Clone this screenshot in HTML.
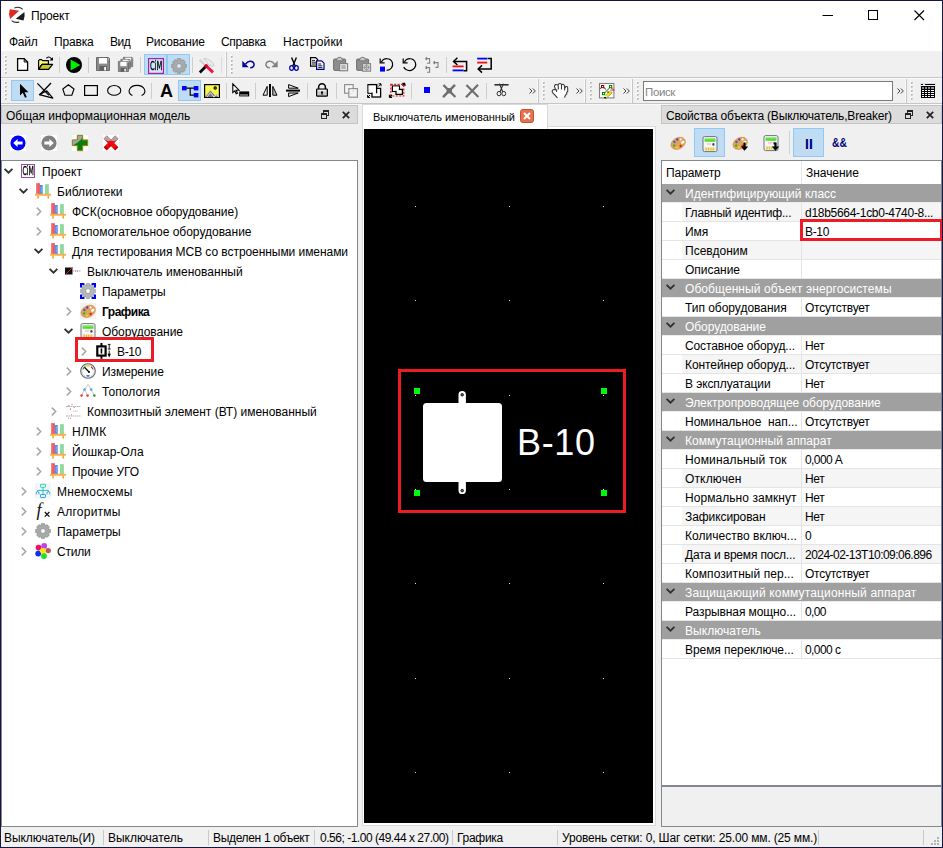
<!DOCTYPE html>
<html lang="ru"><head><meta charset="utf-8"><title>Проект</title>
<style>
html,body{margin:0;padding:0;}
body{width:943px;height:848px;overflow:hidden;background:#f0f0f0;font-family:"Liberation Sans",sans-serif;font-size:12px;color:#000;}
#win{position:relative;width:943px;height:848px;overflow:hidden;background:#f0f0f0;}
.a{position:absolute;}
.t{position:absolute;white-space:nowrap;line-height:14px;height:14px;}
svg{position:absolute;overflow:visible;}
.frame{position:absolute;background:#16163f;}
#titlebar{position:absolute;left:1px;top:1px;width:941px;height:30px;background:#fff;}
#menubar{position:absolute;left:1px;top:31px;width:941px;height:20px;background:#fff;}
.sep{position:absolute;width:1px;background:#c9c9c9;}
.chk{position:absolute;background:#c0dcf3;border:1px solid #90c8f6;box-sizing:border-box;}
.dtitle{position:absolute;box-sizing:border-box;background:#dcdcdc;border:1px solid #c4c4c4;height:19px;}
.tree{position:absolute;box-sizing:border-box;background:#fff;border:1px solid #828790;}
.grp{position:absolute;left:0;width:279px;height:18px;background:#a0a0a0;color:#fff;border-bottom:1px solid #ececec;}
.row{position:absolute;left:0;width:279px;height:19px;}
.row.alt .bg{position:absolute;left:20px;top:0;right:0;height:18px;background:#f5f5f5;}
.row .ln{position:absolute;left:0;right:0;top:18px;height:1px;background:#e4e4e4;}
.row .vl{position:absolute;left:139px;top:0;width:1px;height:19px;background:#e4e4e4;}

</style></head>
<body>
<div id="win">
<!-- titlebar -->
<div id="titlebar"></div>
<svg style="left:8px;top:7px" width="18" height="17" viewBox="0 0 18 17">
 <path d="M1.7 2.2 L11.2 3.7 L2.0 11.9 Q0.2 7 1.7 2.2 Z" fill="#dc2a22"/>
 <path d="M16.4 5.0 Q17.4 9.4 15.5 13.5 L7.8 11.8 Z" fill="#1c1c1c"/>
 <path d="M6.4 0.9 Q11 -0.9 14.8 2.4" stroke="#2a2a2a" stroke-width="1.1" fill="none"/>
 <path d="M3.6 13.6 Q7 16.4 11.2 14.9" stroke="#2a2a2a" stroke-width="1.1" fill="none"/>
</svg>
<div class="t" style="left:31px;top:9px;letter-spacing:-0.14px;">Проект</div>
<svg style="left:822px;top:9px" width="110" height="13" viewBox="0 0 110 13">
 <path d="M0.5 6.5 H11" stroke="#000" stroke-width="1" fill="none"/>
 <rect x="46.5" y="1.5" width="9" height="9" stroke="#000" stroke-width="1" fill="none"/>
 <path d="M92.5 1.5 L102 11 M102 1.5 L92.5 11" stroke="#000" stroke-width="1.1" fill="none"/>
</svg>
<!-- menubar -->
<div id="menubar"></div>
<div class="t" style="left:9px;top:35px;letter-spacing:-0.25px;">Файл</div>
<div class="t" style="left:54px;top:35px;letter-spacing:-0.17px;">Правка</div>
<div class="t" style="left:110px;top:35px;letter-spacing:-0.47px;">Вид</div>
<div class="t" style="left:146px;top:35px;letter-spacing:-0.19px;">Рисование</div>
<div class="t" style="left:221px;top:35px;letter-spacing:-0.30px;">Справка</div>
<div class="t" style="left:283px;top:35px;letter-spacing:0.07px;">Настройки</div>
<!-- toolbars -->
<div class="a" style="left:1px;top:77px;width:941px;height:1px;background:#c6c6c6;"></div>
<div class="a" style="left:1px;top:78px;width:941px;height:1px;background:#fafafa;"></div>
<div class="a" style="left:1px;top:103px;width:941px;height:1px;background:#c6c6c6;"></div>
<div class="a" style="left:1px;top:104px;width:941px;height:1px;background:#f8f8f8;"></div>
<div class="a" style="left:226px;top:52px;width:1px;height:25px;background:#c6c6c6;"></div><div class="a" style="left:225px;top:52px;width:1px;height:25px;background:#fafafa;"></div>
<div class="a" style="left:538px;top:79px;width:1px;height:24px;background:#c6c6c6;"></div><div class="a" style="left:537px;top:79px;width:1px;height:24px;background:#fafafa;"></div>
<div class="a" style="left:585px;top:79px;width:1px;height:24px;background:#c6c6c6;"></div><div class="a" style="left:584px;top:79px;width:1px;height:24px;background:#fafafa;"></div>
<div class="a" style="left:632px;top:79px;width:1px;height:24px;background:#c6c6c6;"></div><div class="a" style="left:631px;top:79px;width:1px;height:24px;background:#fafafa;"></div>
<div class="a" style="left:906px;top:79px;width:1px;height:24px;background:#c6c6c6;"></div><div class="a" style="left:905px;top:79px;width:1px;height:24px;background:#fafafa;"></div>
<svg style="left:4px;top:55px" width="3" height="19" viewBox="0 0 3 19"><rect x="0" y="0" width="2" height="2" fill="#fdfdfd"/><rect x="1" y="1" width="1.6" height="1.6" fill="#aeaeae"/><rect x="0" y="4" width="2" height="2" fill="#fdfdfd"/><rect x="1" y="5" width="1.6" height="1.6" fill="#aeaeae"/><rect x="0" y="8" width="2" height="2" fill="#fdfdfd"/><rect x="1" y="9" width="1.6" height="1.6" fill="#aeaeae"/><rect x="0" y="12" width="2" height="2" fill="#fdfdfd"/><rect x="1" y="13" width="1.6" height="1.6" fill="#aeaeae"/><rect x="0" y="16" width="2" height="2" fill="#fdfdfd"/><rect x="1" y="17" width="1.6" height="1.6" fill="#aeaeae"/></svg>
<svg style="left:16px;top:57px" width="14" height="15" viewBox="0 0 14 15"><path d="M1.6 1.6h6.6l3.4 3.4v8.4h-10z" fill="#fff" stroke="#000" stroke-width="1.3"/><path d="M8.2 1.6v3.4h3.4" fill="none" stroke="#000" stroke-width="1"/></svg>
<svg style="left:38px;top:56px" width="16" height="15" viewBox="0 0 16 15"><path d="M0.6 13.4V4.6L1.6 3.6H3.6L4.6 4.6H10.4V8.4H4Z" fill="#ffff78" stroke="#000" stroke-width="1.2" stroke-linejoin="round"/><path d="M0.6 13.4L4 8.4H14.6L10.6 13.4Z" fill="#c8c832" stroke="#000" stroke-width="1.2" stroke-linejoin="round"/><path d="M8.4 2.4C9.6 0.4 12 0.4 13.6 3" stroke="#000" fill="none" stroke-width="1.1"/><path d="M11.4 4.6h3.6v-3.4z" fill="#000"/></svg>
<div class="sep" style="left:59px;top:57px;height:16px;background:#cdcdcd;"></div>
<svg style="left:66px;top:57px" width="16" height="16" viewBox="0 0 16 16"><circle cx="8" cy="8" r="8" fill="#000"/><path d="M4.6 2.4L14.4 8L4.6 13.6z" fill="#00f000"/></svg>
<div class="sep" style="left:88px;top:57px;height:16px;background:#cdcdcd;"></div>
<svg style="left:96px;top:57px" width="14" height="14" viewBox="0 0 14 14"><path d="M0.5 0.5h12l1 1v12h-13z" fill="#8a8a8a" stroke="#6a6a6a" stroke-width="1"/><rect x="3" y="1" width="8" height="5.6" fill="#fff"/><rect x="3.4" y="9" width="7.4" height="4.6" fill="#606060"/><rect x="8.2" y="10" width="1.8" height="3.4" fill="#fff"/><rect x="12" y="1.6" width="0.9" height="0.9" fill="#fff"/></svg>
<svg style="left:118px;top:57px" width="16" height="15" viewBox="0 0 16 15"><g transform="translate(5 0) scale(0.72)"><path d="M0.5 0.5h12l1 1v12h-13z" fill="#8a8a8a" stroke="#6a6a6a" stroke-width="1"/><rect x="3" y="1" width="8" height="5.6" fill="#fff"/><rect x="3.4" y="9" width="7.4" height="4.6" fill="#606060"/><rect x="8.2" y="10" width="1.8" height="3.4" fill="#fff"/><rect x="12" y="1.6" width="0.9" height="0.9" fill="#fff"/></g><g transform="translate(2.5 2) scale(0.72)"><path d="M0.5 0.5h12l1 1v12h-13z" fill="#8a8a8a" stroke="#6a6a6a" stroke-width="1"/><rect x="3" y="1" width="8" height="5.6" fill="#fff"/><rect x="3.4" y="9" width="7.4" height="4.6" fill="#606060"/><rect x="8.2" y="10" width="1.8" height="3.4" fill="#fff"/><rect x="12" y="1.6" width="0.9" height="0.9" fill="#fff"/></g><g transform="translate(0 4) scale(0.78)"><path d="M0.5 0.5h12l1 1v12h-13z" fill="#8a8a8a" stroke="#6a6a6a" stroke-width="1"/><rect x="3" y="1" width="8" height="5.6" fill="#fff"/><rect x="3.4" y="9" width="7.4" height="4.6" fill="#606060"/><rect x="8.2" y="10" width="1.8" height="3.4" fill="#fff"/><rect x="12" y="1.6" width="0.9" height="0.9" fill="#fff"/></g></svg>
<div class="sep" style="left:140px;top:57px;height:16px;background:#cdcdcd;"></div>
<div class="chk" style="left:144px;top:54px;width:23px;height:21px;"></div>
<div class="chk" style="left:167px;top:54px;width:23px;height:21px;"></div>
<svg style="left:148px;top:58px" width="16" height="16" viewBox="0 0 16 16"><rect x="0.6" y="0.6" width="14.8" height="14.8" fill="#cfe6f7" stroke="#b01cb0" stroke-width="1.2"/><text x="8.1" y="12.4" style="will-change:transform" font-family="DejaVu Sans Condensed,DejaVu Sans,sans-serif" font-size="12.5" text-anchor="middle" textLength="12.4" lengthAdjust="spacingAndGlyphs" fill="#000" stroke="#000" stroke-width="0.35">CiM</text></svg>
<svg style="left:171px;top:58px" width="16" height="16" viewBox="0 0 16 16"><polygon points="6.34,0.58 9.66,0.58 10.18,2.84 10.11,2.81 12.07,1.58 14.42,3.93 13.19,5.89 13.16,5.82 15.42,6.34 15.42,9.66 13.16,10.18 13.19,10.11 14.42,12.07 12.07,14.42 10.11,13.19 10.18,13.16 9.66,15.42 6.34,15.42 5.82,13.16 5.89,13.19 3.93,14.42 1.58,12.07 2.81,10.11 2.84,10.18 0.58,9.66 0.58,6.34 2.84,5.82 2.81,5.89 1.58,3.93 3.93,1.58 5.89,2.81 5.82,2.84" fill="#a6aaa9" stroke="#8a8f8e" stroke-width="0.6" stroke-linejoin="round"/><circle cx="8" cy="8" r="2.3" fill="#dbe9f5" stroke="#80858a" stroke-width="0.5"/></svg>
<div class="sep" style="left:192px;top:57px;height:16px;background:#cdcdcd;"></div>
<svg style="left:198px;top:58px" width="17" height="16" viewBox="0 0 17 16"><path d="M6 0.4C10 0.6 14 3 16.2 7.2L14.8 8.6L13.2 6.8L11.6 8L9.6 5.4C9 3.8 8 2.2 6 1.6Z" fill="#ececec" stroke="#bcbcbc" stroke-width="0.7"/><path d="M1.8 1.8L8 8" stroke="#c4c4c4" stroke-width="2.2"/><path d="M2 1.6L7.6 7.2" stroke="#f4f4f4" stroke-width="0.8"/><path d="M1.8 14.4L8 8.2" stroke="#0a0a0a" stroke-width="2.8"/><path d="M8.2 8L15 14.4" stroke="#f01446" stroke-width="3"/><circle cx="8.2" cy="7.8" r="1.7" fill="#d8001c"/></svg>
<div class="sep" style="left:221px;top:57px;height:16px;background:#dcdcdc;"></div>
<svg style="left:230px;top:55px" width="3" height="19" viewBox="0 0 3 19"><rect x="0" y="0" width="2" height="2" fill="#fdfdfd"/><rect x="1" y="1" width="1.6" height="1.6" fill="#aeaeae"/><rect x="0" y="4" width="2" height="2" fill="#fdfdfd"/><rect x="1" y="5" width="1.6" height="1.6" fill="#aeaeae"/><rect x="0" y="8" width="2" height="2" fill="#fdfdfd"/><rect x="1" y="9" width="1.6" height="1.6" fill="#aeaeae"/><rect x="0" y="12" width="2" height="2" fill="#fdfdfd"/><rect x="1" y="13" width="1.6" height="1.6" fill="#aeaeae"/><rect x="0" y="16" width="2" height="2" fill="#fdfdfd"/><rect x="1" y="17" width="1.6" height="1.6" fill="#aeaeae"/></svg>
<svg style="left:242px;top:60px" width="14" height="9" viewBox="0 0 14 9"><path d="M0.3 0.8v6.4h6.4z" fill="#0000a0"/><path d="M3.6 4.2C5.6 0.6 10.4 0.4 11.8 3.2C13 5.8 10.8 7.8 8.2 7.8" stroke="#0000a0" stroke-width="1.5" fill="none"/></svg>
<svg style="left:264px;top:60px" width="14" height="9" viewBox="0 0 14 9"><path d="M13.7 0.8v6.4h-6.4z" fill="#808080"/><path d="M10.4 4.2C8.4 0.6 3.6 0.4 2.2 3.2C1 5.8 3.2 7.8 5.8 7.8" stroke="#808080" stroke-width="1.5" fill="none"/></svg>
<svg style="left:289px;top:57px" width="10" height="14" viewBox="0 0 10 14"><path d="M2.6 0.4L6.4 9.4M7.4 0.4L3.6 9.4" stroke="#000" stroke-width="1.4"/><ellipse cx="2.6" cy="11" rx="1.9" ry="2.3" fill="none" stroke="#0000a0" stroke-width="1.2"/><ellipse cx="7.4" cy="11" rx="1.9" ry="2.3" fill="none" stroke="#0000a0" stroke-width="1.2"/></svg>
<svg style="left:310px;top:57px" width="15" height="13" viewBox="0 0 15 13"><path d="M0.6 0.6h5l2 2v6.6h-7z" fill="#fff" stroke="#000" stroke-width="1.2"/><path d="M2 3.4h3M2 5.2h4M2 7h4" stroke="#000" stroke-width="0.9"/><path d="M6.6 3.8h5l2.4 2.4v6.2h-7.4z" fill="#fff" stroke="#000090" stroke-width="1.2"/><path d="M8.2 7h3M8.2 8.8h4.2M8.2 10.6h4.2" stroke="#000" stroke-width="0.9"/></svg>
<svg style="left:333px;top:57px" width="16" height="15" viewBox="0 0 16 15"><rect x="0.6" y="2" width="12" height="11.4" rx="1" fill="#8e8e8e" stroke="#707070" stroke-width="1"/><path d="M4 2.4l1-2h3.2l1 2h1v1.4h-7.2v-1.4z" fill="#c8c8c8" stroke="#707070" stroke-width="0.8"/><rect x="6.6" y="6.6" width="8" height="7.2" fill="#e4e4e4" stroke="#787878" stroke-width="1"/><path d="M8.4 9h4M8.4 11h4.4" stroke="#787878" stroke-width="0.9"/></svg>
<svg style="left:356px;top:57px" width="16" height="15" viewBox="0 0 16 15"><rect x="0.6" y="2" width="12" height="11.4" rx="1" fill="#8e8e8e" stroke="#707070" stroke-width="1"/><path d="M4 2.4l1-2h3.2l1 2h1v1.4h-7.2v-1.4z" fill="#c8c8c8" stroke="#707070" stroke-width="0.8"/><rect x="6.6" y="6.6" width="8" height="7.6" fill="#d8d8d8" stroke="#808080" stroke-width="1"/><circle cx="10.6" cy="10.4" r="2.3" fill="none" stroke="#909090" stroke-width="0.8"/><path d="M10.6 7v6.8M7 10.4h7.2" stroke="#909090" stroke-width="0.8"/></svg>
<svg style="left:379px;top:57px" width="15" height="15" viewBox="0 0 15 15"><path d="M2.4 5.2C4.4 0.6 11.6 0.4 13.4 5.6C14.6 9.8 11.6 13.2 7.6 13.4" fill="none" stroke="#000" stroke-width="1.2"/><path d="M1.2 1.4v4.4h4.4" fill="none" stroke="#000" stroke-width="1.2"/><rect x="1" y="9.6" width="5" height="5" fill="#0000ff"/></svg>
<svg style="left:402px;top:57px" width="15" height="15" viewBox="0 0 15 15"><path d="M2.4 5.2C4.4 0.6 11.6 0.4 13.4 5.6C15 11 9 15.4 4 12.6C3 12 2.2 11 1.8 10" fill="none" stroke="#000" stroke-width="1.2"/><path d="M1.2 1.4v4.4h4.4" fill="none" stroke="#000" stroke-width="1.2"/></svg>
<svg style="left:424px;top:57px" width="15" height="16" viewBox="0 0 15 16"><path d="M1.4 1.6h4.2v4.6h-2.6M1.4 1.6l1.4-1.4M1.4 1.6l1.4 1.4" fill="none" stroke="#808080" stroke-width="1.1"/><path d="M1.4 10.6h4.2v4.6h-2.6M1.4 10.6l1.4-1.4M1.4 10.6l1.4 1.4" fill="none" stroke="#808080" stroke-width="1.1"/><path d="M9.4 5.6h4.6v4.8h-2.6M9.4 5.6l1.4-1.4M9.4 5.6l1.4 1.4" fill="none" stroke="#808080" stroke-width="1.1"/></svg>
<div class="sep" style="left:446px;top:57px;height:16px;background:#cdcdcd;"></div>
<svg style="left:452px;top:57px" width="17" height="15" viewBox="0 0 17 15"><path d="M1.6 4.4h13v9.4h-3" fill="none" stroke="#000" stroke-width="1.5"/><path d="M5.4 0.8L1.6 4.4L5.4 8" fill="none" stroke="#000" stroke-width="1.5"/><path d="M0.6 9.4h11" stroke="#f01010" stroke-width="1.8"/><path d="M0.6 13.4h11" stroke="#0000ff" stroke-width="1.8"/></svg>
<svg style="left:476px;top:57px" width="17" height="16" viewBox="0 0 17 16"><path d="M11.6 1.6h3.6v10.4h-13" fill="none" stroke="#000" stroke-width="1.5"/><path d="M6 8.4L2.2 12L6 15.6" fill="none" stroke="#000" stroke-width="1.5"/><path d="M1.2 1.6h10" stroke="#0000ff" stroke-width="1.8"/><path d="M1.2 5.6h10" stroke="#f01010" stroke-width="1.8"/></svg>
<svg style="left:4px;top:81px" width="3" height="19" viewBox="0 0 3 19"><rect x="0" y="0" width="2" height="2" fill="#fdfdfd"/><rect x="1" y="1" width="1.6" height="1.6" fill="#aeaeae"/><rect x="0" y="4" width="2" height="2" fill="#fdfdfd"/><rect x="1" y="5" width="1.6" height="1.6" fill="#aeaeae"/><rect x="0" y="8" width="2" height="2" fill="#fdfdfd"/><rect x="1" y="9" width="1.6" height="1.6" fill="#aeaeae"/><rect x="0" y="12" width="2" height="2" fill="#fdfdfd"/><rect x="1" y="13" width="1.6" height="1.6" fill="#aeaeae"/><rect x="0" y="16" width="2" height="2" fill="#fdfdfd"/><rect x="1" y="17" width="1.6" height="1.6" fill="#aeaeae"/></svg>
<div class="chk" style="left:11px;top:80px;width:23px;height:21px;"></div>
<svg style="left:19px;top:83px" width="10" height="16" viewBox="0 0 10 16"><path d="M1 0.8v11.6l2.8-2.6l2.2 5l1.8-0.8l-2.2-4.8h3.8z" fill="#000"/></svg>
<svg style="left:36px;top:82px" width="18" height="17" viewBox="0 0 18 17"><path d="M1.4 1.4L13 13.4M15 1L3.6 13" stroke="#000" stroke-width="1.3" fill="none"/><path d="M3.4 12.6l13.4 3.6l-6-7.4z" fill="none" stroke="#000" stroke-width="1.2" stroke-linejoin="round"/></svg>
<svg style="left:62px;top:84px" width="13" height="12" viewBox="0 0 13 12"><path d="M6.4 0.8L12 5l-2.2 6.2H2.8L0.8 5z" fill="none" stroke="#000" stroke-width="1.1" stroke-linejoin="round"/></svg>
<svg style="left:84px;top:85px" width="14" height="11" viewBox="0 0 14 11"><rect x="0.6" y="0.6" width="12.8" height="9.8" fill="none" stroke="#000" stroke-width="1.2"/></svg>
<svg style="left:107px;top:84px" width="15" height="12" viewBox="0 0 15 12"><ellipse cx="7.2" cy="6.4" rx="6.6" ry="4.9" fill="none" stroke="#000" stroke-width="1.1"/></svg>
<svg style="left:128px;top:84px" width="18" height="13" viewBox="0 0 18 13"><path d="M4.4 11.6C-2 8.6 1.6 1.4 9 1.4C16.4 1.4 20 8.6 13.6 11.6" fill="none" stroke="#000" stroke-width="1.1"/></svg>
<div class="sep" style="left:151px;top:83px;height:16px;background:#cdcdcd;"></div>
<div class="t" style="left:160px;top:81px;font-weight:bold;font-size:18px;line-height:20px;height:20px;">A</div>
<div class="chk" style="left:178px;top:80px;width:23px;height:21px;"></div>
<svg style="left:182px;top:86px" width="17" height="12" viewBox="0 0 17 12"><path d="M4 2.2h8.4M8.2 2.2v7h4" fill="none" stroke="#000" stroke-width="1.2"/><rect x="0" y="0" width="4.6" height="4.4" fill="#0000ff"/><rect x="11.8" y="0" width="4.6" height="4.4" fill="#0000ff"/><rect x="11.8" y="7" width="4.6" height="4.4" fill="#0000ff"/></svg>
<svg style="left:204px;top:84px" width="16" height="14" viewBox="0 0 16 14"><rect x="0.6" y="0.6" width="14.8" height="12.8" fill="#f6f650" stroke="#000" stroke-width="1.2"/><circle cx="11.2" cy="4" r="1.7" fill="#000"/><circle cx="11.2" cy="4" r="0.7" fill="#808000"/><path d="M1.2 13L6.4 6.6L11 11.4L12.6 10L14.8 13z" fill="#787878"/><path d="M3 13L6.4 8.6L10 13M9.6 13l3-2.2l2 2.2" fill="none" stroke="#fff" stroke-width="0.8"/></svg>
<div class="sep" style="left:226px;top:83px;height:16px;background:#cdcdcd;"></div>
<svg style="left:232px;top:83px" width="18" height="14" viewBox="0 0 18 14"><path d="M0.8 0.8v8.8l2-1.8l1.4 3l1.3-0.6L4.1 7.2h2.9z" fill="#fff" stroke="#000" stroke-width="1.1"/><rect x="7.2" y="8.4" width="10" height="5" fill="#000"/><path d="M9 11v2M11 11v2M13 11v2M15 11v2" stroke="#fff" stroke-width="0.8"/></svg>
<div class="sep" style="left:255px;top:83px;height:16px;background:#cdcdcd;"></div>
<svg style="left:262px;top:84px" width="16" height="13" viewBox="0 0 16 13"><path d="M8 0v13" stroke="#000" stroke-width="2"/><path d="M5.2 2.4v8.8H1z" fill="none" stroke="#000" stroke-width="1"/><path d="M10.8 2.4v8.8H15z" fill="#c0c0c0" stroke="#000" stroke-width="1"/></svg>
<svg style="left:286px;top:84px" width="14" height="13" viewBox="0 0 14 13"><path d="M0 6.6h14" stroke="#000" stroke-width="2"/><path d="M2.6 0.6v3.6h9.6z" fill="none" stroke="#000" stroke-width="1"/><path d="M2.6 12.6v-3.6h9.6z" fill="none" stroke="#000" stroke-width="1"/></svg>
<div class="sep" style="left:307px;top:83px;height:16px;background:#cdcdcd;"></div>
<svg style="left:316px;top:83px" width="12" height="14" viewBox="0 0 12 14"><path d="M2.6 6V4.2a3.4 3.4 0 0 1 6.8 0V6" fill="none" stroke="#000" stroke-width="1.5"/><rect x="0.6" y="6" width="10.8" height="7.2" rx="0.8" fill="#c8c8c8" stroke="#000" stroke-width="1.2"/><rect x="2" y="7" width="8" height="1.4" fill="#f0f0f0"/><circle cx="6" cy="9.4" r="1.1" fill="#000"/><rect x="5.5" y="9.4" width="1" height="2.6" fill="#000"/></svg>
<div class="sep" style="left:336px;top:83px;height:16px;background:#cdcdcd;"></div>
<svg style="left:344px;top:84px" width="14" height="14" viewBox="0 0 14 14"><rect x="0.6" y="0.6" width="8.6" height="8.6" fill="#f4f4f4" stroke="#8a8a8a" stroke-width="1.1"/><rect x="4.8" y="4.6" width="8.6" height="8.6" fill="#f4f4f4" stroke="#8a8a8a" stroke-width="1.1"/><circle cx="7" cy="7" r="2.3" fill="none" stroke="#c0c0c0" stroke-width="0.7" stroke-dasharray="1 1"/></svg>
<svg style="left:367px;top:83px" width="15" height="15" viewBox="0 0 15 15"><rect x="1" y="1.6" width="8.6" height="8.6" fill="#fff" stroke="#000" stroke-width="1.3"/><rect x="5" y="5.4" width="8.6" height="8.6" fill="#fff" stroke="#000" stroke-width="1.3"/><rect x="1.6" y="2.2" width="7.4" height="7.4" fill="#fff"/><path d="M1 1.6h8.6v8.6" fill="none" stroke="#000" stroke-width="1.3"/><path d="M11.4 3.4L14 0.8M14 0.8h-2.4M14 0.8v2.4" stroke="#000" stroke-width="1" fill="none"/><path d="M3 12L0.6 14.4M0.6 14.4h2.4M0.6 14.4v-2.4" stroke="#000" stroke-width="1" fill="none"/></svg>
<svg style="left:389px;top:83px" width="17" height="15" viewBox="0 0 17 15"><rect x="3.4" y="3" width="7" height="5.4" fill="#fff" stroke="#000" stroke-width="1.3"/><rect x="7" y="6.4" width="6.4" height="5" fill="#fff" stroke="#000" stroke-width="1.3"/><rect x="4" y="3.6" width="5.8" height="4.2" fill="#fff"/><rect x="1.8" y="1.4" width="13" height="11.6" fill="none" stroke="#f01010" stroke-width="1.2" stroke-dasharray="2 1.4"/><path d="M13.4 2.6L16 0.4M16 0.4h-2.6M16 0.4v2.6" stroke="#000" stroke-width="1.1" fill="none"/><path d="M3 12L0.4 14.4M0.4 14.4h2.6M0.4 14.4v-2.6" stroke="#000" stroke-width="1.1" fill="none"/></svg>
<div class="sep" style="left:411px;top:83px;height:16px;background:#cdcdcd;"></div>
<div class="a" style="left:424px;top:87px;width:6px;height:6px;background:#0000ff;"></div>
<svg style="left:442px;top:84px" width="15" height="14" viewBox="0 0 15 14"><path d="M1.4 1L13.4 13M13 0.8L1 13.2" stroke="#6e6e6e" stroke-width="2.4"/><rect x="4.6" y="4" width="5.4" height="5.4" fill="#6e6e6e"/></svg>
<svg style="left:465px;top:84px" width="15" height="14" viewBox="0 0 15 14"><path d="M1.4 1L13.4 13" stroke="#6e6e6e" stroke-width="2"/><path d="M13 0.8L1 13.2" stroke="#6e6e6e" stroke-width="2.2"/></svg>
<div class="sep" style="left:486px;top:83px;height:16px;background:#cdcdcd;"></div>
<svg style="left:494px;top:83px" width="15" height="14" viewBox="0 0 15 14"><path d="M0.4 1.8h14.2" stroke="#303030" stroke-width="1.6"/><path d="M5.4 0.6L8.8 9M9.4 0.6L6 9" stroke="#303030" stroke-width="1.1"/><ellipse cx="5" cy="10.6" rx="1.9" ry="2.2" fill="none" stroke="#303030" stroke-width="1"/><ellipse cx="9.8" cy="10.6" rx="1.9" ry="2.2" fill="none" stroke="#303030" stroke-width="1"/></svg>
<svg style="left:529px;top:88px" width="7" height="6" viewBox="0 0 7 6"><path d="M0.5 0.5L3 3L0.5 5.5M3.8 0.5L6.3 3L3.8 5.5" stroke="#404040" stroke-width="1" fill="none"/></svg>
<svg style="left:542px;top:81px" width="3" height="19" viewBox="0 0 3 19"><rect x="0" y="0" width="2" height="2" fill="#fdfdfd"/><rect x="1" y="1" width="1.6" height="1.6" fill="#aeaeae"/><rect x="0" y="4" width="2" height="2" fill="#fdfdfd"/><rect x="1" y="5" width="1.6" height="1.6" fill="#aeaeae"/><rect x="0" y="8" width="2" height="2" fill="#fdfdfd"/><rect x="1" y="9" width="1.6" height="1.6" fill="#aeaeae"/><rect x="0" y="12" width="2" height="2" fill="#fdfdfd"/><rect x="1" y="13" width="1.6" height="1.6" fill="#aeaeae"/><rect x="0" y="16" width="2" height="2" fill="#fdfdfd"/><rect x="1" y="17" width="1.6" height="1.6" fill="#aeaeae"/></svg>
<svg style="left:552px;top:83px" width="17" height="16" viewBox="0 0 17 16"><path d="M5.5 14.8L0.6 9.6C-0.3 8.4 0.4 6.6 1.8 6.5L3.6 6.6L2.5 3.6C2.2 1.6 4.6 0.8 5.9 2.2C6.4 0.2 9 -0.2 9.6 1.8C10.6 0.8 12.6 1.2 12.6 3.4L13.2 4.4C14.2 2.8 15.8 3.6 15.7 5.2V8.4L14.7 9.4V11L13.4 12.2L12.5 14.6Z" fill="#fff"/><path d="M5.5 14.8L0.6 9.6C-0.3 8.4 0.4 6.6 1.8 6.5L3.6 6.6L2.5 3.6C2.2 1.6 4.6 0.8 5.9 2.2C6.4 0.2 9 -0.2 9.6 1.8C10.6 0.8 12.6 1.2 12.6 3.4L13.2 4.4C14.2 2.8 15.8 3.6 15.7 5.2V8.4L14.7 9.4V11L13.4 12.2L12.5 14.6" fill="none" stroke="#3a3a3a" stroke-width="1.1"/><path d="M6.3 2.4V6.4M9.5 2V6.4M12.6 3.6V7.4M3.6 6.6L4.6 7V9" fill="none" stroke="#3a3a3a" stroke-width="1.1"/></svg>
<svg style="left:576px;top:88px" width="7" height="6" viewBox="0 0 7 6"><path d="M0.5 0.5L3 3L0.5 5.5M3.8 0.5L6.3 3L3.8 5.5" stroke="#404040" stroke-width="1" fill="none"/></svg>
<svg style="left:589px;top:81px" width="3" height="19" viewBox="0 0 3 19"><rect x="0" y="0" width="2" height="2" fill="#fdfdfd"/><rect x="1" y="1" width="1.6" height="1.6" fill="#aeaeae"/><rect x="0" y="4" width="2" height="2" fill="#fdfdfd"/><rect x="1" y="5" width="1.6" height="1.6" fill="#aeaeae"/><rect x="0" y="8" width="2" height="2" fill="#fdfdfd"/><rect x="1" y="9" width="1.6" height="1.6" fill="#aeaeae"/><rect x="0" y="12" width="2" height="2" fill="#fdfdfd"/><rect x="1" y="13" width="1.6" height="1.6" fill="#aeaeae"/><rect x="0" y="16" width="2" height="2" fill="#fdfdfd"/><rect x="1" y="17" width="1.6" height="1.6" fill="#aeaeae"/></svg>
<svg style="left:599px;top:83px" width="17" height="17" viewBox="0 0 17 17"><rect x="0.5" y="0.5" width="14.4" height="14.4" fill="#fff" stroke="#808080" stroke-width="1.1"/><path d="M1 5.6L2.4 4.4M5 4.6L6.8 6.6" stroke="#800000" stroke-width="1.1" stroke-dasharray="1 0.5" fill="none"/><path d="M6.2 9.4L10.4 5" stroke="#008000" stroke-width="1.1" stroke-dasharray="1 0.4" fill="none"/><rect x="2.5" y="2.5" width="2.2" height="2.2" fill="#fff" stroke="#800000" stroke-width="1"/><rect x="10.5" y="2.5" width="2.2" height="2.2" fill="#fff" stroke="#008000" stroke-width="1"/><rect x="3.5" y="9.5" width="2.2" height="2.2" fill="#fff" stroke="#008000" stroke-width="1"/><path d="M8.4 8.4h1.8v1.4l-1.8 0.4z" fill="#800000"/><path d="M7.4 13.4L12.2 9" stroke="#e8e800" stroke-width="2.6"/><path d="M6.6 12.4L11.4 8" stroke="#8a8a18" stroke-width="0.8" stroke-dasharray="1 0.6"/><path d="M8.2 14.4L13 10" stroke="#a0a010" stroke-width="0.8"/><path d="M11.6 8L13.4 6.2" stroke="#b0b0b0" stroke-width="2.4"/><path d="M12.4 5.6l1.2-0.6 M13.6 7h1.8 M12.6 9.4l0.6 0" stroke="#ff1010" stroke-width="1.3"/><path d="M4.8 14.2l1.6-0.4l1.2 1.6l-1.8 0.2z" fill="#000"/></svg>
<svg style="left:623px;top:88px" width="7" height="6" viewBox="0 0 7 6"><path d="M0.5 0.5L3 3L0.5 5.5M3.8 0.5L6.3 3L3.8 5.5" stroke="#404040" stroke-width="1" fill="none"/></svg>
<svg style="left:636px;top:81px" width="3" height="19" viewBox="0 0 3 19"><rect x="0" y="0" width="2" height="2" fill="#fdfdfd"/><rect x="1" y="1" width="1.6" height="1.6" fill="#aeaeae"/><rect x="0" y="4" width="2" height="2" fill="#fdfdfd"/><rect x="1" y="5" width="1.6" height="1.6" fill="#aeaeae"/><rect x="0" y="8" width="2" height="2" fill="#fdfdfd"/><rect x="1" y="9" width="1.6" height="1.6" fill="#aeaeae"/><rect x="0" y="12" width="2" height="2" fill="#fdfdfd"/><rect x="1" y="13" width="1.6" height="1.6" fill="#aeaeae"/><rect x="0" y="16" width="2" height="2" fill="#fdfdfd"/><rect x="1" y="17" width="1.6" height="1.6" fill="#aeaeae"/></svg>
<div class="a" style="left:643px;top:81px;width:250px;height:20px;box-sizing:border-box;background:#fff;border:1px solid #7a7a7a;"></div>
<div class="t" style="left:645px;top:85px;letter-spacing:-0.38px;color:#858585;font-size:11.5px;">Поиск</div>
<svg style="left:897px;top:88px" width="7" height="6" viewBox="0 0 7 6"><path d="M0.5 0.5L3 3L0.5 5.5M3.8 0.5L6.3 3L3.8 5.5" stroke="#404040" stroke-width="1" fill="none"/></svg>
<svg style="left:910px;top:81px" width="3" height="19" viewBox="0 0 3 19"><rect x="0" y="0" width="2" height="2" fill="#fdfdfd"/><rect x="1" y="1" width="1.6" height="1.6" fill="#aeaeae"/><rect x="0" y="4" width="2" height="2" fill="#fdfdfd"/><rect x="1" y="5" width="1.6" height="1.6" fill="#aeaeae"/><rect x="0" y="8" width="2" height="2" fill="#fdfdfd"/><rect x="1" y="9" width="1.6" height="1.6" fill="#aeaeae"/><rect x="0" y="12" width="2" height="2" fill="#fdfdfd"/><rect x="1" y="13" width="1.6" height="1.6" fill="#aeaeae"/><rect x="0" y="16" width="2" height="2" fill="#fdfdfd"/><rect x="1" y="17" width="1.6" height="1.6" fill="#aeaeae"/></svg>
<svg style="left:921px;top:83px" width="14" height="15" viewBox="0 0 14 15"><rect x="-0.5" y="0.5" width="15" height="3" fill="none" stroke="#d8d8d8" stroke-width="1" opacity="0.7"/><rect x="0" y="1" width="2" height="1" fill="#000"/><rect x="4" y="1" width="10" height="1" fill="#000"/><rect x="0" y="3" width="14" height="12" fill="#000"/><rect x="1" y="4" width="2" height="2" fill="#8a8a8a"/><rect x="4" y="4" width="2" height="2" fill="#8a8a8a"/><rect x="7" y="4" width="2" height="2" fill="#8a8a8a"/><rect x="10" y="4" width="3" height="2" fill="#8a8a8a"/><rect x="1" y="7" width="2" height="1" fill="#fff"/><rect x="1" y="9" width="2" height="1" fill="#fff"/><rect x="1" y="11" width="2" height="1" fill="#fff"/><rect x="1" y="13" width="2" height="1" fill="#fff"/><rect x="4" y="7" width="2" height="1" fill="#fff"/><rect x="4" y="9" width="2" height="1" fill="#fff"/><rect x="4" y="11" width="2" height="1" fill="#fff"/><rect x="4" y="13" width="2" height="1" fill="#fff"/><rect x="7" y="7" width="2" height="1" fill="#fff"/><rect x="7" y="9" width="2" height="1" fill="#fff"/><rect x="7" y="11" width="2" height="1" fill="#fff"/><rect x="7" y="13" width="2" height="1" fill="#fff"/><rect x="10" y="7" width="3" height="1" fill="#fff"/><rect x="10" y="9" width="3" height="1" fill="#fff"/><rect x="10" y="11" width="3" height="1" fill="#fff"/><rect x="10" y="13" width="3" height="1" fill="#fff"/></svg>
<!-- leftdock -->
<div class="dtitle" style="left:1px;top:105px;width:357px;"></div>
<div class="t" style="left:6px;top:109px;letter-spacing:-0.04px;">Общая информационная модель</div>
<svg style="left:321px;top:110px" width="9" height="9" viewBox="0 0 9 9"><rect x="2" y="0" width="6" height="2" fill="#222"/><path d="M2.5 0v3 M7.5 0v6 M6 5.5h2" stroke="#222" stroke-width="1" fill="none"/><rect x="0" y="3" width="6" height="2" fill="#222"/><rect x="0.5" y="3.5" width="5" height="5" stroke="#222" stroke-width="1" fill="none"/></svg>
<svg style="left:342px;top:111px" width="8" height="8" viewBox="0 0 8 8"><path d="M0.8 0.8L7.2 7.2M7.2 0.8L0.8 7.2" stroke="#222" stroke-width="1.7" fill="none"/></svg>
<div class="a" style="left:10px;top:135px;width:16px;height:16px;background:#fff;"></div>
<svg style="left:10px;top:135px" width="16" height="16" viewBox="0 0 16 16"><circle cx="8" cy="8" r="7.6" fill="#0000ff"/><path d="M3.2 8L7.6 4v2.6h5v2.8h-5V12z" fill="#fff"/></svg>
<div class="a" style="left:41px;top:135px;width:16px;height:16px;background:#fff;"></div>
<svg style="left:41px;top:135px" width="16" height="16" viewBox="0 0 16 16"><circle cx="8" cy="8" r="7.6" fill="#808080"/><path d="M12.8 8L8.4 4v2.6h-5v2.8h5V12z" fill="#fff"/></svg>
<div class="a" style="left:72px;top:135px;width:16px;height:16px;background:#fff;"></div>
<svg style="left:72px;top:135px" width="16" height="16" viewBox="0 0 16 16"><defs><clipPath id="cpl"><path d="M5.4 0.4h5.2v4.6h5v5.6h-5v5h-5.2v-5h-5v-5.6h5z"/></clipPath></defs><path d="M5.4 0.4h5.2v4.6h5v5.6h-5v5h-5.2v-5h-5v-5.6h5z" fill="#0a7d0a" stroke="#8a8a14" stroke-width="0.9"/><path d="M0 0H11.6L9 4.6L5.6 7.4L0 11z" fill="#a4a4a4" clip-path="url(#cpl)"/><path d="M5.4 0.4h5.2v4.6h5v5.6h-5v5h-5.2v-5h-5v-5.6h5z" fill="none" stroke="#8a8a14" stroke-width="0.9"/></svg>
<div class="a" style="left:103px;top:135px;width:16px;height:16px;background:#fff;"></div>
<svg style="left:103px;top:135px" width="16" height="16" viewBox="0 0 16 16"><defs><clipPath id="cpx"><path d="M0.6 3.8L3.8 0.6L8 4.8L12.2 0.6L15.4 3.8L11.2 8L15.4 12.2L12.2 15.4L8 11.2L3.8 15.4L0.6 12.2L4.8 8z"/></clipPath></defs><path d="M0.6 3.8L3.8 0.6L8 4.8L12.2 0.6L15.4 3.8L11.2 8L15.4 12.2L12.2 15.4L8 11.2L3.8 15.4L0.6 12.2L4.8 8z" fill="#f20c0c"/><path d="M0 0H16V4.4L10.6 6.2L8 5.4L5.4 6.2L0 4.4z" fill="#a8a8a8" clip-path="url(#cpx)"/><path d="M1 12.4L3.6 15L5 13.6L2.4 11z M12.4 15L15 12.4L13.8 11.2L11.2 13.8z M8 10.6L6.6 12 5.4 10.6 7 9.4z" fill="#9a0808" opacity="0.85"/></svg>
<div class="tree" style="left:1px;top:160px;width:357px;height:667px;"></div>
<svg style="left:4px;top:168px" width="9" height="6" viewBox="0 0 9 6"><path d="M0.6 0.8L4.5 4.7L8.4 0.8" stroke="#303030" stroke-width="1.8" fill="none"/></svg>
<svg style="left:20px;top:163px" width="16" height="16" viewBox="0 0 16 16"><rect x="1.5" y="1.5" width="13" height="13" fill="#fff" stroke="#a04ca0" stroke-width="1"/><text x="8.1" y="12" style="will-change:transform" font-family="DejaVu Sans Condensed,DejaVu Sans,sans-serif" font-size="11.5" text-anchor="middle" textLength="11.4" lengthAdjust="spacingAndGlyphs" fill="#000" stroke="#000" stroke-width="0.35">CiM</text></svg>
<div class="t" style="left:42px;top:165px;letter-spacing:0.08px;">Проект</div>
<svg style="left:19px;top:188px" width="9" height="6" viewBox="0 0 9 6"><path d="M0.6 0.8L4.5 4.7L8.4 0.8" stroke="#303030" stroke-width="1.8" fill="none"/></svg>
<svg style="left:35px;top:183px" width="16" height="16" viewBox="0 0 16 16"><rect x="1.3" y="0.2" width="3.6" height="11" fill="#f0565a"/><rect x="1.3" y="0.2" width="1.2" height="11" fill="#f47a7c"/><rect x="4.9" y="2" width="2.8" height="9.2" fill="#4a8df0"/><rect x="5.8" y="3.4" width="0.9" height="6" fill="#7fb0f6"/><rect x="10.2" y="1.2" width="3.5" height="10" fill="#79d08a"/><rect x="11.4" y="1.2" width="1.1" height="10" fill="#a5e0b0"/><rect x="0" y="10.8" width="16" height="2" rx="0.6" fill="#fbb040"/><rect x="2.3" y="12.6" width="1.5" height="3" fill="#f4a030"/><rect x="12.5" y="12.6" width="1.5" height="3" fill="#f4a030"/></svg>
<div class="t" style="left:57px;top:185px;letter-spacing:0.06px;">Библиотеки</div>
<svg style="left:36px;top:207px" width="6" height="9" viewBox="0 0 6 9"><path d="M0.8 0.6L4.7 4.5L0.8 8.4" stroke="#a6a6a6" stroke-width="1.5" fill="none"/></svg>
<svg style="left:50px;top:203px" width="16" height="16" viewBox="0 0 16 16"><rect x="1.3" y="0.2" width="3.6" height="11" fill="#f0565a"/><rect x="1.3" y="0.2" width="1.2" height="11" fill="#f47a7c"/><rect x="4.9" y="2" width="2.8" height="9.2" fill="#4a8df0"/><rect x="5.8" y="3.4" width="0.9" height="6" fill="#7fb0f6"/><rect x="10.2" y="1.2" width="3.5" height="10" fill="#79d08a"/><rect x="11.4" y="1.2" width="1.1" height="10" fill="#a5e0b0"/><rect x="0" y="10.8" width="16" height="2" rx="0.6" fill="#fbb040"/><rect x="2.3" y="12.6" width="1.5" height="3" fill="#f4a030"/><rect x="12.5" y="12.6" width="1.5" height="3" fill="#f4a030"/></svg>
<div class="t" style="left:72px;top:205px;letter-spacing:-0.05px;">ФСК(основное оборудование)</div>
<svg style="left:36px;top:227px" width="6" height="9" viewBox="0 0 6 9"><path d="M0.8 0.6L4.7 4.5L0.8 8.4" stroke="#a6a6a6" stroke-width="1.5" fill="none"/></svg>
<svg style="left:50px;top:223px" width="16" height="16" viewBox="0 0 16 16"><rect x="1.3" y="0.2" width="3.6" height="11" fill="#f0565a"/><rect x="1.3" y="0.2" width="1.2" height="11" fill="#f47a7c"/><rect x="4.9" y="2" width="2.8" height="9.2" fill="#4a8df0"/><rect x="5.8" y="3.4" width="0.9" height="6" fill="#7fb0f6"/><rect x="10.2" y="1.2" width="3.5" height="10" fill="#79d08a"/><rect x="11.4" y="1.2" width="1.1" height="10" fill="#a5e0b0"/><rect x="0" y="10.8" width="16" height="2" rx="0.6" fill="#fbb040"/><rect x="2.3" y="12.6" width="1.5" height="3" fill="#f4a030"/><rect x="12.5" y="12.6" width="1.5" height="3" fill="#f4a030"/></svg>
<div class="t" style="left:72px;top:225px;letter-spacing:-0.01px;">Вспомогательное оборудование</div>
<svg style="left:34px;top:248px" width="9" height="6" viewBox="0 0 9 6"><path d="M0.6 0.8L4.5 4.7L8.4 0.8" stroke="#303030" stroke-width="1.8" fill="none"/></svg>
<svg style="left:50px;top:243px" width="16" height="16" viewBox="0 0 16 16"><rect x="1.3" y="0.2" width="3.6" height="11" fill="#f0565a"/><rect x="1.3" y="0.2" width="1.2" height="11" fill="#f47a7c"/><rect x="4.9" y="2" width="2.8" height="9.2" fill="#4a8df0"/><rect x="5.8" y="3.4" width="0.9" height="6" fill="#7fb0f6"/><rect x="10.2" y="1.2" width="3.5" height="10" fill="#79d08a"/><rect x="11.4" y="1.2" width="1.1" height="10" fill="#a5e0b0"/><rect x="0" y="10.8" width="16" height="2" rx="0.6" fill="#fbb040"/><rect x="2.3" y="12.6" width="1.5" height="3" fill="#f4a030"/><rect x="12.5" y="12.6" width="1.5" height="3" fill="#f4a030"/></svg>
<div class="t" style="left:72px;top:245px;letter-spacing:-0.06px;">Для тестирования МСВ со встроенными именами</div>
<svg style="left:49px;top:268px" width="9" height="6" viewBox="0 0 9 6"><path d="M0.6 0.8L4.5 4.7L8.4 0.8" stroke="#303030" stroke-width="1.8" fill="none"/></svg>
<svg style="left:65px;top:263px" width="16" height="16" viewBox="0 0 16 16"><rect x="0" y="4.5" width="7.5" height="7" fill="#101010"/><path d="M0.5 11.5L7.5 4.5" stroke="#e02020" stroke-width="1"/><path d="M7.5 8h1.6 M10 8h1.2 M12 8h1.2 M14 8h1.6 M10.6 7.2v1.6 M12.6 7.2v1.6" stroke="#909090" stroke-width="0.8"/></svg>
<div class="t" style="left:87px;top:265px;letter-spacing:0.03px;">Выключатель именованный</div>
<svg style="left:80px;top:283px" width="16" height="16" viewBox="0 0 16 16"><polygon points="6.34,0.58 9.66,0.58 10.18,2.84 10.11,2.81 12.07,1.58 14.42,3.93 13.19,5.89 13.16,5.82 15.42,6.34 15.42,9.66 13.16,10.18 13.19,10.11 14.42,12.07 12.07,14.42 10.11,13.19 10.18,13.16 9.66,15.42 6.34,15.42 5.82,13.16 5.89,13.19 3.93,14.42 1.58,12.07 2.81,10.11 2.84,10.18 0.58,9.66 0.58,6.34 2.84,5.82 2.81,5.89 1.58,3.93 3.93,1.58 5.89,2.81 5.82,2.84" fill="#b4b8b8" stroke="#8e9494" stroke-width="0.6" stroke-linejoin="round"/><circle cx="8" cy="8" r="2.3" fill="#fff" stroke="#80858a" stroke-width="0.5"/><path d="M0 0h4.4v2h-2.4v2.4h-2z M16 0h-4.4v2h2.4v2.4h2z M0 16h4.4v-2h-2.4v-2.4h-2z M16 16h-4.4v-2h2.4v-2.4h2z" fill="#0000ff"/></svg>
<div class="t" style="left:102px;top:285px;letter-spacing:-0.03px;">Параметры</div>
<svg style="left:66px;top:307px" width="6" height="9" viewBox="0 0 6 9"><path d="M0.8 0.6L4.7 4.5L0.8 8.4" stroke="#a6a6a6" stroke-width="1.5" fill="none"/></svg>
<svg style="left:80px;top:303px" width="16" height="16" viewBox="0 0 16 16"><rect width="16" height="16" fill="#f3f3f3"/><g transform="rotate(-28 8 8)"><ellipse cx="8" cy="8.4" rx="7.6" ry="5.6" fill="#e0a458"/><ellipse cx="8" cy="8.4" rx="7.6" ry="5.6" fill="none" stroke="#c98a3c" stroke-width="0.6"/><ellipse cx="12.6" cy="9.6" rx="1.9" ry="1.3" fill="#fff"/><circle cx="3.4" cy="8.4" r="1.2" fill="#30b030"/><circle cx="5.4" cy="5.4" r="1.2" fill="#3060e0"/><circle cx="9" cy="4.6" r="1.2" fill="#7030c0"/><circle cx="12" cy="6" r="1.1" fill="#fff"/><circle cx="5" cy="11.4" r="1.2" fill="#e8d020"/><circle cx="9" cy="11.8" r="1.2" fill="#e02020"/></g></svg>
<div class="t" style="left:102px;top:305px;letter-spacing:-0.52px;font-weight:bold;">Графика</div>
<svg style="left:64px;top:328px" width="9" height="6" viewBox="0 0 9 6"><path d="M0.6 0.8L4.5 4.7L8.4 0.8" stroke="#303030" stroke-width="1.8" fill="none"/></svg>
<svg style="left:80px;top:323px" width="16" height="16" viewBox="0 0 16 16"><rect x="1" y="0.6" width="14" height="15" rx="1.6" fill="#f6f6f6" stroke="#6e747a" stroke-width="1"/><rect x="2.6" y="2.6" width="10.8" height="3.2" fill="#58d838"/><rect x="2.6" y="2.6" width="10.8" height="1" fill="#7ce860"/><rect x="5.4" y="7.6" width="1.2" height="0.8" fill="#f06060"/><rect x="7.4" y="7.6" width="1.2" height="0.8" fill="#f06060"/><ellipse cx="11.4" cy="8.4" rx="1.1" ry="1.4" fill="#404850"/><rect x="2.2" y="11.4" width="11.6" height="3" fill="#e8e8e8"/><rect x="3.4" y="11.6" width="1.3" height="3" fill="#f0c000"/><rect x="5.8" y="11.6" width="1.3" height="3" fill="#f0c000"/><rect x="8.2" y="11.6" width="1.3" height="3" fill="#f0c000"/><rect x="10.6" y="11.6" width="1.3" height="3" fill="#f0c000"/></svg>
<div class="t" style="left:102px;top:325px;letter-spacing:-0.06px;">Оборудование</div>
<svg style="left:81px;top:347px" width="6" height="9" viewBox="0 0 6 9"><path d="M0.8 0.6L4.7 4.5L0.8 8.4" stroke="#a6a6a6" stroke-width="1.5" fill="none"/></svg>
<svg style="left:95px;top:343px" width="16" height="16" viewBox="0 0 16 16"><path d="M6.45 0V15.8" stroke="#000" stroke-width="2"/><rect x="2.3" y="3.4" width="8.3" height="9.2" fill="#fff" stroke="#000" stroke-width="2.2"/><path d="M6.45 5.4V10.6" stroke="#000" stroke-width="1.6"/><path d="M12.8 1.4h2.8 M14.2 1.4v4.6 M12.8 6h2.8 M14.2 7.6v4" stroke="#000" stroke-width="0.9" fill="none"/><path d="M12.5 10.8l1.7 3.6 1.7-3.6z" fill="#000"/></svg>
<div class="t" style="left:117px;top:345px;letter-spacing:-0.34px;">В-10</div>
<svg style="left:66px;top:367px" width="6" height="9" viewBox="0 0 6 9"><path d="M0.8 0.6L4.7 4.5L0.8 8.4" stroke="#a6a6a6" stroke-width="1.5" fill="none"/></svg>
<svg style="left:80px;top:363px" width="16" height="16" viewBox="0 0 16 16"><circle cx="8" cy="8" r="7.3" fill="#f6f6f6" stroke="#606468" stroke-width="1.1"/><circle cx="8" cy="8" r="6" fill="#fff" stroke="#c8c8c8" stroke-width="0.6"/><path d="M3.2 6.2 A5.2 5.2 0 0 1 5.4 3.6" stroke="#20a020" stroke-width="1.2" fill="none"/><path d="M6.4 3.1 A5.2 5.2 0 0 1 10 3.2" stroke="#e8c800" stroke-width="1.2" fill="none"/><path d="M11 3.8 A5.2 5.2 0 0 1 12.9 6.4" stroke="#e02020" stroke-width="1.2" fill="none"/><path d="M4.6 4.4 L9 9" stroke="#000" stroke-width="1.3"/><circle cx="9" cy="9" r="1" fill="#000"/><path d="M6 12.2h4l-2 1.8z" fill="#1040e0"/></svg>
<div class="t" style="left:102px;top:365px;letter-spacing:-0.07px;">Измерение</div>
<svg style="left:66px;top:387px" width="6" height="9" viewBox="0 0 6 9"><path d="M0.8 0.6L4.7 4.5L0.8 8.4" stroke="#a6a6a6" stroke-width="1.5" fill="none"/></svg>
<svg style="left:80px;top:383px" width="16" height="16" viewBox="0 0 16 16"><path d="M8 1.5 L4.6 6.5 L1.4 12.5 M4.6 6.5 L7.6 12.5 M8 1.5 L11.2 6.5 L14.4 12.5" stroke="#b0b0b0" stroke-width="0.7" fill="none"/><circle cx="4.6" cy="6.6" r="1.3" fill="#5aa0f0"/><circle cx="11.2" cy="6.6" r="1.3" fill="#5aa0f0"/><circle cx="1.6" cy="12.6" r="1.3" fill="#f04040"/><circle cx="7.6" cy="12.6" r="1.3" fill="#f04040"/><circle cx="14.4" cy="12.6" r="1.3" fill="#30a040"/></svg>
<div class="t" style="left:102px;top:385px;letter-spacing:0.07px;">Топология</div>
<svg style="left:51px;top:407px" width="6" height="9" viewBox="0 0 6 9"><path d="M0.8 0.6L4.7 4.5L0.8 8.4" stroke="#a6a6a6" stroke-width="1.5" fill="none"/></svg>
<svg style="left:65px;top:403px" width="16" height="16" viewBox="0 0 16 16"><path d="M1 3.5h2 M3.5 3.5h1.5 M5.5 3.5h2 M8 3.5h1 M9.5 3.5h2 M12 3.5h1.5 M14 3.5h1.5" stroke="#a0a0a0" stroke-width="0.8"/><path d="M1 13h2 M3.5 13h1.5 M5.5 13h2 M8 13h1 M9.5 13h2 M12 13h1.5 M14 13h1.5" stroke="#a0a0a0" stroke-width="0.8"/><path d="M8 8.2h1.4 M10 8.2h1 M11.6 8.2h1.2" stroke="#b0b0b0" stroke-width="0.8"/><path d="M3 2.6h1.4 M8.6 4.4h1.2" stroke="#707070" stroke-width="0.7"/><rect x="6.6" y="1" width="0.9" height="0.9" fill="#f04060"/><rect x="5" y="5.6" width="0.9" height="0.9" fill="#202020"/><rect x="6" y="11.4" width="0.9" height="0.9" fill="#f04060"/><rect x="3" y="14.6" width="0.9" height="0.9" fill="#f04060"/><rect x="5.2" y="14.8" width="0.9" height="0.9" fill="#f04060"/></svg>
<div class="t" style="left:87px;top:405px;letter-spacing:-0.01px;">Композитный элемент (ВТ) именованный</div>
<svg style="left:36px;top:427px" width="6" height="9" viewBox="0 0 6 9"><path d="M0.8 0.6L4.7 4.5L0.8 8.4" stroke="#a6a6a6" stroke-width="1.5" fill="none"/></svg>
<svg style="left:50px;top:423px" width="16" height="16" viewBox="0 0 16 16"><rect x="1.3" y="0.2" width="3.6" height="11" fill="#f0565a"/><rect x="1.3" y="0.2" width="1.2" height="11" fill="#f47a7c"/><rect x="4.9" y="2" width="2.8" height="9.2" fill="#4a8df0"/><rect x="5.8" y="3.4" width="0.9" height="6" fill="#7fb0f6"/><rect x="10.2" y="1.2" width="3.5" height="10" fill="#79d08a"/><rect x="11.4" y="1.2" width="1.1" height="10" fill="#a5e0b0"/><rect x="0" y="10.8" width="16" height="2" rx="0.6" fill="#fbb040"/><rect x="2.3" y="12.6" width="1.5" height="3" fill="#f4a030"/><rect x="12.5" y="12.6" width="1.5" height="3" fill="#f4a030"/></svg>
<div class="t" style="left:72px;top:425px;letter-spacing:0.22px;">НЛМК</div>
<svg style="left:36px;top:447px" width="6" height="9" viewBox="0 0 6 9"><path d="M0.8 0.6L4.7 4.5L0.8 8.4" stroke="#a6a6a6" stroke-width="1.5" fill="none"/></svg>
<svg style="left:50px;top:443px" width="16" height="16" viewBox="0 0 16 16"><rect x="1.3" y="0.2" width="3.6" height="11" fill="#f0565a"/><rect x="1.3" y="0.2" width="1.2" height="11" fill="#f47a7c"/><rect x="4.9" y="2" width="2.8" height="9.2" fill="#4a8df0"/><rect x="5.8" y="3.4" width="0.9" height="6" fill="#7fb0f6"/><rect x="10.2" y="1.2" width="3.5" height="10" fill="#79d08a"/><rect x="11.4" y="1.2" width="1.1" height="10" fill="#a5e0b0"/><rect x="0" y="10.8" width="16" height="2" rx="0.6" fill="#fbb040"/><rect x="2.3" y="12.6" width="1.5" height="3" fill="#f4a030"/><rect x="12.5" y="12.6" width="1.5" height="3" fill="#f4a030"/></svg>
<div class="t" style="left:72px;top:445px;letter-spacing:0.11px;">Йошкар-Ола</div>
<svg style="left:36px;top:467px" width="6" height="9" viewBox="0 0 6 9"><path d="M0.8 0.6L4.7 4.5L0.8 8.4" stroke="#a6a6a6" stroke-width="1.5" fill="none"/></svg>
<svg style="left:50px;top:463px" width="16" height="16" viewBox="0 0 16 16"><rect x="1.3" y="0.2" width="3.6" height="11" fill="#f0565a"/><rect x="1.3" y="0.2" width="1.2" height="11" fill="#f47a7c"/><rect x="4.9" y="2" width="2.8" height="9.2" fill="#4a8df0"/><rect x="5.8" y="3.4" width="0.9" height="6" fill="#7fb0f6"/><rect x="10.2" y="1.2" width="3.5" height="10" fill="#79d08a"/><rect x="11.4" y="1.2" width="1.1" height="10" fill="#a5e0b0"/><rect x="0" y="10.8" width="16" height="2" rx="0.6" fill="#fbb040"/><rect x="2.3" y="12.6" width="1.5" height="3" fill="#f4a030"/><rect x="12.5" y="12.6" width="1.5" height="3" fill="#f4a030"/></svg>
<div class="t" style="left:72px;top:465px;letter-spacing:-0.03px;">Прочие УГО</div>
<svg style="left:21px;top:487px" width="6" height="9" viewBox="0 0 6 9"><path d="M0.8 0.6L4.7 4.5L0.8 8.4" stroke="#a6a6a6" stroke-width="1.5" fill="none"/></svg>
<svg style="left:35px;top:483px" width="16" height="16" viewBox="0 0 16 16"><rect x="0" y="0" width="16" height="16" fill="#f2f6f8"/><rect x="5.5" y="1.3" width="5" height="3" rx="0.6" fill="#e6fbf6" stroke="#2ed0b0" stroke-width="1"/><path d="M8 4.5v7 M2.6 9V7.4h10.8V9" stroke="#30c0c0" stroke-width="1" fill="none"/><path d="M1.2 11.4V10a1.3 1.3 0 0 1 2.8 0v1.4" stroke="#30a8e8" stroke-width="1" fill="none"/><path d="M12 11.4V10a1.3 1.3 0 0 1 2.8 0v1.4" stroke="#30a8e8" stroke-width="1" fill="none"/><rect x="5.5" y="11.5" width="5" height="3" rx="0.6" fill="#eaf6ff" stroke="#30a0f0" stroke-width="1"/></svg>
<div class="t" style="left:57px;top:485px;letter-spacing:0.19px;">Мнемосхемы</div>
<svg style="left:21px;top:507px" width="6" height="9" viewBox="0 0 6 9"><path d="M0.8 0.6L4.7 4.5L0.8 8.4" stroke="#a6a6a6" stroke-width="1.5" fill="none"/></svg>
<svg style="left:35px;top:503px" width="16" height="16" viewBox="0 0 16 16"><text x="1.6" y="12.6" font-family="Liberation Serif,serif" font-style="italic" font-size="18" fill="#111">f</text><path d="M9.8 9l4.6 4.6 M14.4 9l-4.6 4.6" stroke="#111" stroke-width="1.3"/></svg>
<div class="t" style="left:57px;top:505px;letter-spacing:0.24px;">Алгоритмы</div>
<svg style="left:21px;top:527px" width="6" height="9" viewBox="0 0 6 9"><path d="M0.8 0.6L4.7 4.5L0.8 8.4" stroke="#a6a6a6" stroke-width="1.5" fill="none"/></svg>
<svg style="left:35px;top:523px" width="16" height="16" viewBox="0 0 16 16"><polygon points="6.34,0.58 9.66,0.58 10.18,2.84 10.11,2.81 12.07,1.58 14.42,3.93 13.19,5.89 13.16,5.82 15.42,6.34 15.42,9.66 13.16,10.18 13.19,10.11 14.42,12.07 12.07,14.42 10.11,13.19 10.18,13.16 9.66,15.42 6.34,15.42 5.82,13.16 5.89,13.19 3.93,14.42 1.58,12.07 2.81,10.11 2.84,10.18 0.58,9.66 0.58,6.34 2.84,5.82 2.81,5.89 1.58,3.93 3.93,1.58 5.89,2.81 5.82,2.84" fill="#a6aaa9" stroke="#8a8f8e" stroke-width="0.6" stroke-linejoin="round"/><circle cx="8" cy="8" r="2.3" fill="#fff" stroke="#80858a" stroke-width="0.5"/></svg>
<div class="t" style="left:57px;top:525px;letter-spacing:-0.03px;">Параметры</div>
<svg style="left:21px;top:547px" width="6" height="9" viewBox="0 0 6 9"><path d="M0.8 0.6L4.7 4.5L0.8 8.4" stroke="#a6a6a6" stroke-width="1.5" fill="none"/></svg>
<svg style="left:35px;top:543px" width="16" height="16" viewBox="0 0 16 16"><rect x="0" y="0" width="16" height="16" fill="#f8f8f8"/><circle cx="3.6" cy="4.6" r="2.9" fill="#f01060"/><circle cx="9.2" cy="2.9" r="2.9" fill="#c040f0"/><circle cx="13.2" cy="7.6" r="2.7" fill="#b85850"/><circle cx="3.2" cy="10.6" r="2.9" fill="#1030f0"/><circle cx="9" cy="13" r="2.9" fill="#20e020"/><circle cx="7.8" cy="7.8" r="2.8" fill="#f8e800"/></svg>
<div class="t" style="left:57px;top:545px;letter-spacing:-0.22px;">Стили</div>
<div class="a" style="left:75px;top:337px;width:79px;height:25px;box-sizing:border-box;border:3px solid #ed1c24;"></div>
<!-- center -->
<div class="a" style="left:362px;top:126px;width:294px;height:700px;box-sizing:border-box;background:#fff;border:1px solid #dadada;"></div>
<div class="a" style="left:362px;top:104px;width:186px;height:25px;box-sizing:border-box;background:#fff;border:1px solid #dadada;border-bottom:none;"></div>
<div class="t" style="left:373px;top:110px;letter-spacing:-0.01px;font-size:11px;">Выключатель именованный</div>
<svg style="left:520px;top:109px" width="14" height="14" viewBox="0 0 14 14">
 <rect x="0.5" y="0.5" width="13" height="13" rx="2.2" fill="#e4714e" stroke="#c9522f" stroke-width="1"/>
 <path d="M4 4L10 10M10 4L4 10" stroke="#fff" stroke-width="2" fill="none"/>
</svg>
<div class="a" id="canvas" style="left:364px;top:129px;width:289px;height:694px;background:#000;overflow:hidden;">
 <svg style="left:0;top:0" width="289" height="694" viewBox="364 129 289 694">
  <g fill="#e0e0e0">
   <rect x="415" y="206" width="1" height="1"/><rect x="509" y="206" width="1" height="1"/><rect x="603" y="206" width="1" height="1"/>
   <rect x="415" y="300" width="1" height="1"/><rect x="509" y="300" width="1" height="1"/><rect x="603" y="300" width="1" height="1"/>
   <rect x="415" y="395" width="1" height="1"/><rect x="509" y="395" width="1" height="1"/><rect x="603" y="395" width="1" height="1"/>
   <rect x="415" y="489" width="1" height="1"/><rect x="509" y="489" width="1" height="1"/><rect x="603" y="489" width="1" height="1"/>
   <rect x="415" y="583" width="1" height="1"/><rect x="509" y="583" width="1" height="1"/><rect x="603" y="583" width="1" height="1"/>
   <rect x="415" y="678" width="1" height="1"/><rect x="509" y="678" width="1" height="1"/><rect x="603" y="678" width="1" height="1"/>
   <rect x="415" y="772" width="1" height="1"/><rect x="509" y="772" width="1" height="1"/><rect x="603" y="772" width="1" height="1"/>
  </g>
  <rect x="399.5" y="370.5" width="225" height="141" fill="none" stroke="#ed1c24" stroke-width="3"/>
  <g fill="#00f80c">
   <rect x="414" y="388" width="6" height="6"/><rect x="601" y="388" width="6" height="6"/>
   <rect x="414" y="490" width="6" height="6"/><rect x="601" y="490" width="6" height="6"/>
  </g>
  <path d="M458.5 403V394.6a3.7 3.7 0 0 1 7.4 0V403z M458.5 482V490.4a3.7 3.7 0 0 0 7.4 0V482z" fill="#fff"/>
  <rect x="423" y="403" width="79" height="79" rx="3.5" fill="#fff"/>
  <circle cx="462.2" cy="394.8" r="1.3" fill="#666" stroke="#111" stroke-width="0.9"/>
  <circle cx="462.2" cy="490.6" r="1.3" fill="#666" stroke="#111" stroke-width="0.9"/>
  <text x="517" y="455" font-family="Liberation Sans,sans-serif" font-size="36" textLength="78" lengthAdjust="spacing" fill="#fff">B-10</text>
 </svg>
</div>
<!-- rightdock -->
<div class="dtitle" style="left:661px;top:105px;width:281px;"></div>
<div class="t" style="left:666px;top:109px;letter-spacing:-0.18px;">Свойства объекта (Выключатель,Breaker)</div>
<svg style="left:905px;top:110px" width="9" height="9" viewBox="0 0 9 9"><rect x="2" y="0" width="6" height="2" fill="#222"/><path d="M2.5 0v3 M7.5 0v6 M6 5.5h2" stroke="#222" stroke-width="1" fill="none"/><rect x="0" y="3" width="6" height="2" fill="#222"/><rect x="0.5" y="3.5" width="5" height="5" stroke="#222" stroke-width="1" fill="none"/></svg>
<svg style="left:926px;top:111px" width="8" height="8" viewBox="0 0 8 8"><path d="M0.8 0.8L7.2 7.2M7.2 0.8L0.8 7.2" stroke="#222" stroke-width="1.7" fill="none"/></svg>
<svg style="left:670px;top:135px" width="16" height="16" viewBox="0 0 16 16"><g transform="rotate(-28 8 8)"><ellipse cx="8" cy="8.4" rx="7.6" ry="5.6" fill="#e0a458"/><ellipse cx="8" cy="8.4" rx="7.6" ry="5.6" fill="none" stroke="#c98a3c" stroke-width="0.6"/><ellipse cx="12.6" cy="9.6" rx="1.9" ry="1.3" fill="#fff"/><circle cx="3.4" cy="8.4" r="1.2" fill="#30b030"/><circle cx="5.4" cy="5.4" r="1.2" fill="#3060e0"/><circle cx="9" cy="4.6" r="1.2" fill="#7030c0"/><circle cx="12" cy="6" r="1.1" fill="#fff"/><circle cx="5" cy="11.4" r="1.2" fill="#e8d020"/><circle cx="9" cy="11.8" r="1.2" fill="#e02020"/></g></svg>
<div class="chk" style="left:694px;top:128px;width:31px;height:29px;"></div>
<svg style="left:702px;top:136px" width="16" height="16" viewBox="0 0 16 16"><rect x="1" y="0.6" width="14" height="15" rx="1.6" fill="#f6f6f6" stroke="#6e747a" stroke-width="1"/><rect x="2.6" y="2.6" width="10.8" height="3.2" fill="#58d838"/><rect x="2.6" y="2.6" width="10.8" height="1" fill="#7ce860"/><rect x="5.4" y="7.6" width="1.2" height="0.8" fill="#f06060"/><rect x="7.4" y="7.6" width="1.2" height="0.8" fill="#f06060"/><ellipse cx="11.4" cy="8.4" rx="1.1" ry="1.4" fill="#404850"/><rect x="2.2" y="11.4" width="11.6" height="3" fill="#e8e8e8"/><rect x="3.4" y="11.6" width="1.3" height="3" fill="#f0c000"/><rect x="5.8" y="11.6" width="1.3" height="3" fill="#f0c000"/><rect x="8.2" y="11.6" width="1.3" height="3" fill="#f0c000"/><rect x="10.6" y="11.6" width="1.3" height="3" fill="#f0c000"/></svg>
<svg style="left:732px;top:135px" width="16" height="16" viewBox="0 0 16 16"><g transform="rotate(-28 8 8)"><ellipse cx="8" cy="8.4" rx="7.6" ry="5.6" fill="#e0a458"/><ellipse cx="8" cy="8.4" rx="7.6" ry="5.6" fill="none" stroke="#c98a3c" stroke-width="0.6"/><ellipse cx="12.6" cy="9.6" rx="1.9" ry="1.3" fill="#fff"/><circle cx="3.4" cy="8.4" r="1.2" fill="#30b030"/><circle cx="5.4" cy="5.4" r="1.2" fill="#3060e0"/><circle cx="9" cy="4.6" r="1.2" fill="#7030c0"/><circle cx="12" cy="6" r="1.1" fill="#fff"/><circle cx="5" cy="11.4" r="1.2" fill="#e8d020"/><circle cx="9" cy="11.8" r="1.2" fill="#e02020"/></g><path d="M11.4 7.4h2.2v4h2.6l-3.7 4.4-3.7-4.4h2.6z" fill="#000"/></svg>
<svg style="left:763px;top:135px" width="16" height="16" viewBox="0 0 16 16"><rect x="1" y="0.6" width="14" height="15" rx="1.6" fill="#f6f6f6" stroke="#6e747a" stroke-width="1"/><rect x="2.6" y="2.6" width="10.8" height="3.2" fill="#58d838"/><rect x="2.6" y="2.6" width="10.8" height="1" fill="#7ce860"/><rect x="5.4" y="7.6" width="1.2" height="0.8" fill="#f06060"/><rect x="7.4" y="7.6" width="1.2" height="0.8" fill="#f06060"/><ellipse cx="11.4" cy="8.4" rx="1.1" ry="1.4" fill="#404850"/><rect x="2.2" y="11.4" width="11.6" height="3" fill="#e8e8e8"/><rect x="3.4" y="11.6" width="1.3" height="3" fill="#f0c000"/><rect x="5.8" y="11.6" width="1.3" height="3" fill="#f0c000"/><rect x="8.2" y="11.6" width="1.3" height="3" fill="#f0c000"/><rect x="10.6" y="11.6" width="1.3" height="3" fill="#f0c000"/><path d="M11.4 7.4h2.2v4h2.6l-3.7 4.4-3.7-4.4h2.6z" fill="#000"/></svg>
<div class="sep" style="left:789px;top:131px;height:23px;background:#d0d0d0"></div>
<div class="chk" style="left:793px;top:128px;width:31px;height:29px;"></div>
<div class="t" style="left:805px;top:137px;font-weight:bold;color:#000080;font-size:14px;">II</div>
<div class="t" style="left:832px;top:136px;font-weight:bold;color:#000080;font-size:13.5px;transform:scaleX(0.76);transform-origin:0 0;">&amp;&amp;</div>
<div class="tree" style="left:661px;top:160px;width:281px;height:626px;"></div>
<div class="a" style="left:661px;top:786px;width:281px;height:41px;box-sizing:border-box;border:1px solid #828790;background:#f0f0f0;"></div>
<div class="a" style="left:662px;top:161px;width:279px;height:23px;background:#fff;"></div>
<div class="a" style="left:801px;top:161px;width:1px;height:23px;background:#e5e5e5;"></div>
<div class="t" style="left:666px;top:166px;letter-spacing:-0.08px;">Параметр</div>
<div class="t" style="left:806px;top:166px;letter-spacing:-0.05px;">Значение</div>
<div class="grp" style="left:662px;top:184px;"></div>
<svg style="left:666px;top:189px" width="9" height="6" viewBox="0 0 9 6"><path d="M0.6 0.8L4.5 4.7L8.4 0.8" stroke="#303030" stroke-width="1.8" fill="none"/></svg>
<div class="t" style="left:685px;top:187px;letter-spacing:0.03px;color:#fff;">Идентифицирующий класс</div>
<div class="row alt" style="left:662px;top:203px;"><div class="bg"></div><div class="ln"></div><div class="vl"></div></div>
<div class="t" style="left:685px;top:206px;letter-spacing:-0.22px;">Главный идентиф...</div>
<div class="t" style="left:805px;top:206px;letter-spacing:-0.29px;">d18b5664-1cb0-4740-8...</div>
<div class="row" style="left:662px;top:222px;"><div class="bg"></div><div class="ln"></div><div class="vl"></div></div>
<div class="t" style="left:685px;top:225px;letter-spacing:-0.02px;">Имя</div>
<div class="t" style="left:805px;top:225px;letter-spacing:-0.34px;">В-10</div>
<div class="row alt" style="left:662px;top:241px;"><div class="bg"></div><div class="ln"></div><div class="vl"></div></div>
<div class="t" style="left:685px;top:244px;">Псевдоним</div>
<div class="row" style="left:662px;top:260px;"><div class="bg"></div><div class="ln"></div><div class="vl"></div></div>
<div class="t" style="left:685px;top:263px;letter-spacing:-0.03px;">Описание</div>
<div class="grp" style="left:662px;top:279px;"></div>
<svg style="left:666px;top:284px" width="9" height="6" viewBox="0 0 9 6"><path d="M0.6 0.8L4.5 4.7L8.4 0.8" stroke="#303030" stroke-width="1.8" fill="none"/></svg>
<div class="t" style="left:685px;top:282px;letter-spacing:0.08px;color:#fff;">Обобщенный объект энергосистемы</div>
<div class="row" style="left:662px;top:298px;"><div class="bg"></div><div class="ln"></div><div class="vl"></div></div>
<div class="t" style="left:685px;top:301px;letter-spacing:-0.03px;">Тип оборудования</div>
<div class="t" style="left:805px;top:301px;letter-spacing:-0.25px;">Отсутствует</div>
<div class="grp" style="left:662px;top:317px;"></div>
<svg style="left:666px;top:322px" width="9" height="6" viewBox="0 0 9 6"><path d="M0.6 0.8L4.5 4.7L8.4 0.8" stroke="#303030" stroke-width="1.8" fill="none"/></svg>
<div class="t" style="left:685px;top:320px;letter-spacing:-0.07px;color:#fff;">Оборудование</div>
<div class="row" style="left:662px;top:336px;"><div class="bg"></div><div class="ln"></div><div class="vl"></div></div>
<div class="t" style="left:685px;top:339px;letter-spacing:-0.13px;">Составное оборуд...</div>
<div class="t" style="left:805px;top:339px;letter-spacing:-0.31px;">Нет</div>
<div class="row alt" style="left:662px;top:355px;"><div class="bg"></div><div class="ln"></div><div class="vl"></div></div>
<div class="t" style="left:685px;top:358px;letter-spacing:-0.07px;">Контейнер оборуд...</div>
<div class="t" style="left:805px;top:358px;letter-spacing:-0.25px;">Отсутствует</div>
<div class="row" style="left:662px;top:374px;"><div class="bg"></div><div class="ln"></div><div class="vl"></div></div>
<div class="t" style="left:685px;top:377px;letter-spacing:-0.10px;">В эксплуатации</div>
<div class="t" style="left:805px;top:377px;letter-spacing:-0.31px;">Нет</div>
<div class="grp" style="left:662px;top:393px;"></div>
<svg style="left:666px;top:398px" width="9" height="6" viewBox="0 0 9 6"><path d="M0.6 0.8L4.5 4.7L8.4 0.8" stroke="#303030" stroke-width="1.8" fill="none"/></svg>
<div class="t" style="left:685px;top:396px;letter-spacing:-0.06px;color:#fff;">Электропроводящее оборудование</div>
<div class="row" style="left:662px;top:412px;"><div class="bg"></div><div class="ln"></div><div class="vl"></div></div>
<div class="t" style="left:685px;top:415px;letter-spacing:-0.04px;">Номинальное&nbsp; нап...</div>
<div class="t" style="left:805px;top:415px;letter-spacing:-0.25px;">Отсутствует</div>
<div class="grp" style="left:662px;top:431px;"></div>
<svg style="left:666px;top:436px" width="9" height="6" viewBox="0 0 9 6"><path d="M0.6 0.8L4.5 4.7L8.4 0.8" stroke="#303030" stroke-width="1.8" fill="none"/></svg>
<div class="t" style="left:685px;top:434px;letter-spacing:0.06px;color:#fff;">Коммутационный аппарат</div>
<div class="row" style="left:662px;top:450px;"><div class="bg"></div><div class="ln"></div><div class="vl"></div></div>
<div class="t" style="left:685px;top:453px;letter-spacing:0.15px;">Номинальный ток</div>
<div class="t" style="left:805px;top:453px;letter-spacing:-0.60px;">0,000 А</div>
<div class="row alt" style="left:662px;top:469px;"><div class="bg"></div><div class="ln"></div><div class="vl"></div></div>
<div class="t" style="left:685px;top:472px;letter-spacing:0.14px;">Отключен</div>
<div class="t" style="left:805px;top:472px;letter-spacing:-0.31px;">Нет</div>
<div class="row" style="left:662px;top:488px;"><div class="bg"></div><div class="ln"></div><div class="vl"></div></div>
<div class="t" style="left:685px;top:491px;letter-spacing:0.06px;">Нормально замкнут</div>
<div class="t" style="left:805px;top:491px;letter-spacing:-0.31px;">Нет</div>
<div class="row alt" style="left:662px;top:507px;"><div class="bg"></div><div class="ln"></div><div class="vl"></div></div>
<div class="t" style="left:685px;top:510px;letter-spacing:-0.08px;">Зафиксирован</div>
<div class="t" style="left:805px;top:510px;letter-spacing:-0.31px;">Нет</div>
<div class="row" style="left:662px;top:526px;"><div class="bg"></div><div class="ln"></div><div class="vl"></div></div>
<div class="t" style="left:685px;top:529px;letter-spacing:0.02px;">Количество включ...</div>
<div class="t" style="left:805px;top:529px;">0</div>
<div class="row alt" style="left:662px;top:545px;"><div class="bg"></div><div class="ln"></div><div class="vl"></div></div>
<div class="t" style="left:685px;top:548px;letter-spacing:-0.18px;">Дата и время посл...</div>
<div class="t" style="left:805px;top:548px;letter-spacing:-0.53px;">2024-02-13T10:09:06.896</div>
<div class="row" style="left:662px;top:564px;"><div class="bg"></div><div class="ln"></div><div class="vl"></div></div>
<div class="t" style="left:685px;top:567px;letter-spacing:0.06px;">Композитный пер...</div>
<div class="t" style="left:805px;top:567px;letter-spacing:-0.25px;">Отсутствует</div>
<div class="grp" style="left:662px;top:583px;"></div>
<svg style="left:666px;top:588px" width="9" height="6" viewBox="0 0 9 6"><path d="M0.6 0.8L4.5 4.7L8.4 0.8" stroke="#303030" stroke-width="1.8" fill="none"/></svg>
<div class="t" style="left:685px;top:586px;letter-spacing:0.15px;color:#fff;">Защищающий коммутационный аппарат</div>
<div class="row" style="left:662px;top:602px;"><div class="bg"></div><div class="ln"></div><div class="vl"></div></div>
<div class="t" style="left:685px;top:605px;letter-spacing:-0.09px;">Разрывная мощно...</div>
<div class="t" style="left:805px;top:605px;letter-spacing:-0.66px;">0,00</div>
<div class="grp" style="left:662px;top:621px;"></div>
<svg style="left:666px;top:626px" width="9" height="6" viewBox="0 0 9 6"><path d="M0.6 0.8L4.5 4.7L8.4 0.8" stroke="#303030" stroke-width="1.8" fill="none"/></svg>
<div class="t" style="left:685px;top:624px;letter-spacing:0.05px;color:#fff;">Выключатель</div>
<div class="row" style="left:662px;top:640px;"><div class="bg"></div><div class="ln"></div><div class="vl"></div></div>
<div class="t" style="left:685px;top:643px;letter-spacing:-0.07px;">Время переключе...</div>
<div class="t" style="left:805px;top:643px;letter-spacing:-0.57px;">0,000 с</div>
<div class="a" style="left:800px;top:219px;width:143px;height:22px;box-sizing:border-box;border:3px solid #ed1c24;"></div>
<!-- statusbar -->
<div class="t" style="left:4px;top:831px;letter-spacing:-0.07px;">Выключатель(И)</div>
<div class="t" style="left:108px;top:831px;letter-spacing:-0.03px;">Выключатель</div>
<div class="t" style="left:213px;top:831px;letter-spacing:-0.33px;">Выделен 1 объект</div>
<div class="t" style="left:320px;top:831px;letter-spacing:-0.48px;">0.56; -1.00 (49.44 x 27.00)</div>
<div class="t" style="left:457px;top:831px;letter-spacing:-0.28px;">Графика</div>
<div class="t" style="left:562px;top:831px;letter-spacing:-0.15px;">Уровень сетки: 0, Шаг сетки: 25.00 мм. (25 мм.)</div>
<div class="sep" style="left:103px;top:830px;height:15px;"></div>
<div class="sep" style="left:208px;top:830px;height:15px;"></div>
<div class="sep" style="left:314px;top:830px;height:15px;"></div>
<div class="sep" style="left:452px;top:830px;height:15px;"></div>
<div class="sep" style="left:557px;top:830px;height:15px;"></div>
<div class="sep" style="left:818px;top:830px;height:15px;"></div>
<div class="sep" style="left:923px;top:830px;height:15px;"></div>
<svg style="left:930px;top:836px" width="10" height="10" viewBox="0 0 10 10"><g fill="#b4b4b4">
 <rect x="7" y="1" width="2" height="2"/><rect x="4" y="4" width="2" height="2"/><rect x="7" y="4" width="2" height="2"/>
 <rect x="1" y="7" width="2" height="2"/><rect x="4" y="7" width="2" height="2"/><rect x="7" y="7" width="2" height="2"/></g></svg>
<div class="frame" style="left:0;top:0;width:1px;height:848px;"></div>
<div class="frame" style="left:0;top:0;width:943px;height:1px;"></div>
<div class="frame" style="left:942px;top:0;width:1px;height:848px;"></div>
<div class="frame" style="left:0;top:847px;width:943px;height:1px;"></div>
</div>
</body></html>
